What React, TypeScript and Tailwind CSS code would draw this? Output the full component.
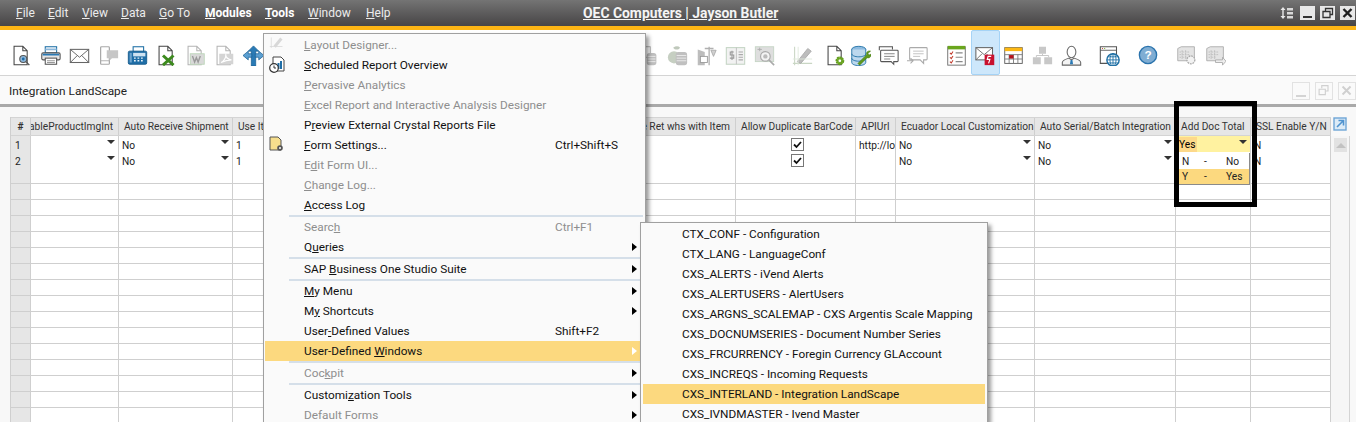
import React from "react";

const Mn = ({ t, className = "" }: { t: string; className?: string }) => {
  const i = t.indexOf("&");
  if (i < 0) return <span className={className}>{t}</span>;
  return (
    <span className={className}>
      {t.slice(0, i)}
      <u>{t[i + 1]}</u>
      {t.slice(i + 2)}
    </span>
  );
};

const G = "#a9a9a9";
const Page = ({ c = "#444" }: { c?: string }) => (
  <path d="M3.5 1.5h10l5 5v16h-15z M13.5 1.5v5h5" fill="#fff" stroke={c} strokeWidth="1.2" />
);
const icons: Record<string, React.ReactNode> = {
  docSearch: (
    <>
      <Page />
      <circle cx="14" cy="16" r="4" fill="#8db8dc" stroke="#555" strokeWidth="1.2" />
      <circle cx="14" cy="16" r="1.6" fill="#1f6ca8" />
      <path d="M17 19l4 4" stroke="#555" strokeWidth="1.6" />
    </>
  ),
  print: (
    <>
      <rect x="6" y="2" width="13" height="7" fill="#fff" stroke="#1c6ea4" strokeWidth="1.2" />
      <rect x="6" y="4" width="13" height="2" fill="#8db8dc" />
      <rect x="2" y="9" width="21" height="8" rx="1.5" fill="#e6e6e6" stroke="#555" strokeWidth="1.2" />
      <rect x="3" y="10" width="19" height="2" fill="#2a7ab5" />
      <rect x="6" y="15" width="13" height="7" fill="#fff" stroke="#555" strokeWidth="1.2" />
      <path d="M8 18h9M8 20h9" stroke="#888" />
    </>
  ),
  mail: (
    <>
      <rect x="1.5" y="5" width="21" height="15" fill="#fff" stroke="#666" strokeWidth="1.2" />
      <path d="M1.5 5l10.5 9 10.5-9M1.5 20l8-8M22.500 20l-8-8" fill="none" stroke="#666" strokeWidth="1.1" />
    </>
  ),
  mobile: (
    <>
      <rect x="3" y="2" width="10" height="20" rx="1" fill="#fff" stroke={G} strokeWidth="1.4" />
      <path d="M3 18h10" stroke={G} />
      <path d="M10 6h13v9h-7l-3 3v-3h-3z" fill="#c6c6c6" />
    </>
  ),
  fax: (
    <>
      <rect x="7" y="2" width="12" height="6" fill="#fff" stroke="#1c6ea4" strokeWidth="1.2" />
      <rect x="1.500" y="7" width="21" height="15" rx="1.500" fill="#1f6ea7" stroke="#155a8c" />
      <rect x="7" y="9" width="14" height="4" fill="#cfe3f2" />
      <path d="M8 15h2M12 15h2M16 15h2M8 18h2M12 18h2M16 18h2" stroke="#e9f3fa" strokeWidth="1.500" />
      <rect x="3" y="9" width="2.500" height="11" fill="#6ea5cf" />
    </>
  ),
  excel: (
    <>
      <Page />
      <path d="M8 12l12 11M20 12L8 23" stroke="#3d8a1e" strokeWidth="3.4" />
    </>
  ),
  word: (
    <>
      <Page c="#b4b4b4" />
      <rect x="6" y="10" width="16" height="12" fill="#d9d9d9" stroke="#bcd6b8" />
      <path d="M8.500 12.500l2.500 7 2-5 2 5 2.500-7" fill="none" stroke="#9a9a9a" strokeWidth="1.600" />
    </>
  ),
  pdf: (
    <>
      <Page c="#b4b4b4" />
      <rect x="6" y="10" width="16" height="12" fill="#d4d4d4" />
      <path d="M8 20c3-1 6-6 5.500-8.500C13 13 16 17 20 17c-4 0-8 1-12 3z" fill="none" stroke="#fff" strokeWidth="1.400" />
    </>
  ),
  arrows: (
    <>
      <path d="M12 1l6 6h-3.500v17h-5V7H6z" fill="#2a7ab5" stroke="#135a8f" strokeWidth=".8" />
      <path d="M0 12l6-5v3h4v4H6v3zM24 12l-6-5v3h-4v4h4v3z" fill="#5b9fd1" stroke="#135a8f" strokeWidth=".8" />
    </>
  ),
  coinsA: (
    <>
      <rect x="2" y="2" width="12" height="12" fill="#fff" stroke={G} />
      <rect x="10" y="9" width="11" height="14" rx="3" fill="#bfbfbf" />
      <path d="M11 13h9M11 16h9M11 19h9" stroke="#eee" />
    </>
  ),
  coinsB: (
    <>
      <circle cx="8" cy="14" r="7" fill="#c6cfc2" />
      <path d="M7 3c3-2 6-2 8 0-2 3-6 3-8 0z" fill="#bfc8bb" />
      <rect x="10" y="8" width="13" height="15" rx="3" fill="#c0c0c0" />
      <path d="M11 12h11M11 15h11M11 18h11" stroke="#eee" />
    </>
  ),
  scale: (
    <>
      <path d="M2 5l8 3v15H2z" fill="#bdbdbd" />
      <path d="M10 4h10M15 2v21" stroke="#b0b0b0" strokeWidth="1.500" />
      <rect x="5" y="13" width="8" height="7" fill="#fff" stroke="#999" />
      <path d="M17 6h6l-3 7z" fill="#d0d0d0" stroke="#aaa" />
    </>
  ),
  dollarDoc: (
    <>
      <rect x="1.500" y="3" width="21" height="19" fill="#f2f2f2" stroke="#c4d4c4" strokeWidth="1.200" />
      <path d="M13 3v19" stroke="#bbb" />
      <path d="M10 8H6v3.500h4V15H5.500M8 6.500V17" fill="none" stroke="#999" strokeWidth="1.200" />
      <path d="M15.500 8h5M15.500 11h5M15.500 14h5M15.500 17h5" stroke="#aaa" strokeWidth="1.400" />
    </>
  ),
  docFind: (
    <>
      <rect x="1.500" y="2" width="21" height="17" fill="#dedede" stroke="#c4d4c4" />
      <circle cx="13" cy="13" r="5.500" fill="#f4f4f4" stroke="#aaa" strokeWidth="1.300" />
      <circle cx="13" cy="13" r="2.500" fill="#bbb" />
      <path d="M17 17l6 6" stroke="#aaa" strokeWidth="1.800" />
      <path d="M4 5h5M6.500 3v4" stroke="#aaa" />
    </>
  ),
  pencilChart: (
    <>
      <path d="M3 2v21M1 21h22" stroke="#c9d6c4" strokeWidth="1.200" />
      <path d="M6 19L18 4l4 3-12 14z" fill="#bdbdbd" stroke="#aaa" />
      <path d="M1 16h22M7 2v21" stroke="#dfe8dc" />
    </>
  ),
  docGear: (
    <>
      <Page />
      <circle cx="17" cy="18" r="3.500" fill="none" stroke="#5f9a1d" strokeWidth="3" strokeDasharray="2 .6" />
      <circle cx="17" cy="18" r="4" fill="#6aa61d" fillOpacity=".85" />
      <circle cx="17" cy="18" r="1.500" fill="#fff" />
    </>
  ),
  dbWrench: (
    <>
      <ellipse cx="10" cy="5" rx="8" ry="3.500" fill="#8dbbe0" stroke="#1c6ea4" />
      <path d="M2 5v15c0 2 3.500 3.500 8 3.500s8-1.500 8-3.500V5" fill="#bcd8ee" stroke="#1c6ea4" />
      <path d="M2 10c0 2 3.500 3.500 8 3.500s8-1.500 8-3.500M2 15c0 2 3.500 3.500 8 3.500s8-1.500 8-3.500" fill="none" stroke="#1c6ea4" />
      <path d="M9 21l10-10c-1-3 2-5 4.500-4l-3 2.500 1 2 2.500-1c.5 3-2 5-4.500 4L11 23z" fill="#5f9a1d" stroke="#3f7510" strokeWidth=".6" />
    </>
  ),
  chat: (
    <>
      <path d="M1.500 6V2h15v3" fill="none" stroke="#555" strokeWidth="1.200" />
      <path d="M4 6h18a1 1 0 011 1v11a1 1 0 01-1 1h-4v3l-3-3H4a1 1 0 01-1-1V7a1 1 0 011-1z" fill="#fff" stroke="#555" strokeWidth="1.200" />
      <path d="M7 10h12M7 13h12M7 16h7" stroke="#777" />
    </>
  ),
  chat2: (
    <>
      <path d="M4 3h18a1 1 0 011 1v12a1 1 0 01-1 1h-3v4l-4-4H4a1 1 0 01-1-1V4a1 1 0 011-1z" fill="#fff" stroke="#aaa" strokeWidth="1.200" />
      <path d="M7 7h12M7 10h12M7 13h8" stroke="#bbb" />
      <path d="M0 18h7m-3-3l3 3-3 3" fill="none" stroke="#aaa" strokeWidth="1.200" />
    </>
  ),
  tasks: (
    <>
      <rect x="2" y="2" width="20" height="21" fill="#fff" stroke="#666" />
      <rect x="2" y="1" width="20" height="4" fill="#6aa61d" />
      <path d="M4.500 9l1.500 1.500 2-3M4.500 14l1.500 1.500 2-3M4.500 19l1.500 1.500 2-3" fill="none" stroke="#c0392b" strokeWidth="1.200" />
      <path d="M11 9h8M11 14h8M11 19h8" stroke="#888" strokeWidth="1.400" />
    </>
  ),
  mailS: (
    <>
      <rect x="1" y="3" width="19" height="14" fill="#fff" stroke="#666" strokeWidth="1.200" />
      <path d="M1 3l9.500 8L20 3M1 17l7-7M20 17l-7-7" fill="none" stroke="#666" />
      <rect x="11" y="11" width="11" height="12" fill="#c8102e" />
      <path d="M18.500 13h-3.500l-1 3.500h3l-1.500 4.500" fill="none" stroke="#fff" strokeWidth="1.300" />
    </>
  ),
  calendar: (
    <>
      <rect x="2" y="3" width="20" height="18" fill="#fff" stroke="#555" />
      <rect x="2" y="3" width="20" height="4" fill="#fdb813" />
      <path d="M2 11h20M2 16h20M7 11v10M12 11v10M17 11v10" stroke="#777" />
      <rect x="7" y="11.500" width="5" height="4" fill="#b5121b" />
    </>
  ),
  org: (
    <>
      <rect x="8" y="2" width="8" height="8" fill="#c8c8c8" />
      <rect x="1" y="14" width="9" height="8" fill="#c8c8c8" />
      <rect x="14" y="14" width="9" height="8" fill="#c8c8c8" />
      <path d="M12 10v2M5 14v-2h14v2" fill="none" stroke="#c0c0c0" />
    </>
  ),
  user: (
    <>
      <ellipse cx="12" cy="8" rx="5" ry="6.500" fill="#fff" stroke="#666" strokeWidth="1.200" />
      <path d="M1.500 23v-3c0-3 5-4 7.500-5l3 2 3-2c2.500 1 7.500 2 7.500 5v3z" fill="#f4f4f4" stroke="#666" strokeWidth="1.200" />
      <path d="M11 17h2l.8 5h-3.600z" fill="#2a7ab5" />
    </>
  ),
  web: (
    <>
      <path d="M20 13V2H1.500v19H10" fill="#fff" stroke="#555" strokeWidth="1.200" />
      <path d="M1.500 6H20" stroke="#555" />
      <circle cx="4" cy="4" r=".7" fill="#c0392b" />
      <circle cx="6.500" cy="4" r=".7" fill="#6aa61d" />
      <circle cx="16" cy="17" r="7" fill="#fff" stroke="#1c6ea4" strokeWidth="1.600" />
      <path d="M9 17h14M16 10v14M10.500 13.500h11M10.500 20.500h11" stroke="#1c6ea4" />
      <ellipse cx="16" cy="17" rx="3.500" ry="7" fill="none" stroke="#1c6ea4" />
    </>
  ),
  gridGear: (
    <>
      <path d="M2 4l4-2h15v16H2z" fill="#e4e4e4" stroke="#aaa" />
      <path d="M4 8h12M4 11h12M4 14h8M7 6v10M11 6v10" stroke="#bbb" strokeDasharray="2 1" />
      <circle cx="17" cy="17" r="4.500" fill="#f2f2f2" stroke="#aaa" strokeWidth="1.500" strokeDasharray="2 1" />
    </>
  ),
  gridArrow: (
    <>
      <path d="M2 4l4-2h15v16H2z" fill="#e4e4e4" stroke="#aaa" />
      <path d="M4 8h12M4 11h12M4 14h8M7 6v10M11 6v10" stroke="#bbb" strokeDasharray="2 1" />
      <path d="M12 17h8v-3l4 4.500-4 4.500v-3h-8z" fill="#eee" stroke="#aaa" />
    </>
  ),
  layoutSmall: (
    <>
      <path d="M3 2v14M1 14h17" stroke="#d6d6d6" />
      <path d="M6 13L15 2l3 2.500-9 11z" fill="#d8d8d8" />
    </>
  ),
};

const Ico = ({ n, size = 21, className = "" }: { n: string; size?: number; className?: string }) => (
  <svg width={size} height={size} viewBox="0 0 24 24" className={`shrink-0 ${className}`}>
    {icons[n]}
  </svg>
);

const toolbar: [string, string][] = [
  ["docSearch", "ml-[11px]"],
  ["print", "ml-[8px]"],
  ["mail", "ml-[8px]"],
  ["mobile", "ml-[8px]"],
  ["fax", "ml-[8px]"],
  ["excel", "ml-[8px]"],
  ["word", "ml-[8px]"],
  ["pdf", "ml-[8px]"],
  ["arrows", "ml-[8px]"],
  ["coinsA", "ml-[374px]"],
  ["coinsB", "ml-[8px]"],
  ["scale", "ml-[8px]"],
  ["dollarDoc", "ml-[8px]"],
  ["docFind", "ml-[8px]"],
  ["pencilChart", "ml-[17px]"],
  ["docGear", "ml-[12px]"],
  ["dbWrench", "ml-[4px]"],
  ["chat", "ml-[7px]"],
  ["chat2", "ml-[8px]"],
  ["tasks", "ml-[18px]"],
];

const ws = "[font-family:Roboto,sans-serif]";

const TopMenu = () => (
  <div className={`relative flex h-[26px] items-center bg-gradient-to-b from-[#747474] to-[#474546] pl-[16px] text-[12px] text-[#ececec] ${ws}`}>
    <Mn t="&File" className="w-[32px]" />
    <Mn t="&Edit" className="w-[34px]" />
    <Mn t="&View" className="w-[39px]" />
    <Mn t="&Data" className="w-[38px]" />
    <Mn t="&Go To" className="w-[46px]" />
    <Mn t="&Modules" className="w-[60px] font-bold text-white" />
    <Mn t="&Tools" className="w-[43px] font-bold text-white" />
    <Mn t="&Window" className="w-[58px]" />
    <Mn t="&Help" className="w-[40px]" />
    <span className="absolute left-[583px] top-[4px] text-[13.900px] font-bold leading-[18px] text-[#f4f4f4] underline">
      OEC Computers | Jayson Butler
    </span>
    <div className="ml-auto mr-[1px] flex items-center">
      <svg width="14" height="14" viewBox="0 0 14 14" className="mr-[6px]">
        <path d="M3 1l2.500 3h-5zM3 13l2.500-3h-5zM2.300 4h1.400v6H2.300z" fill="#e8e8e8" />
        <path d="M7 2h6v2.500H7zM7 6h6v2.500H7zM7 10h6v2.500H7z" fill="#d8d8d8" />
      </svg>
      <span className="flex h-[14px] w-[15px] items-end justify-center bg-[#e8e8e8] pb-[2px]">
        <span className="h-[2px] w-[9px] bg-[#333]" />
      </span>
      <svg width="15" height="14" viewBox="0 0 15 14" className="ml-[5px] bg-[#e8e8e8]">
        <path d="M5.500 5V2.500h7v6H10M3 5.500h7v6H3z" fill="none" stroke="#333" strokeWidth="1.300" />
      </svg>
      <svg width="15" height="14" viewBox="0 0 15 14" className="ml-[5px] bg-[#e8e8e8]">
        <path d="M3.500 3l8 8M11.500 3l-8 8" stroke="#222" strokeWidth="2.400" />
      </svg>
    </div>
  </div>
);

const Toolbar = () => (
  <div className="flex h-[46px] items-center border-b border-[#d4d4d4] bg-white pt-[5px]">
    {toolbar.map(([n, c]) => (
      <Ico key={n} n={n} className={c} />
    ))}
    <span className="-mt-[5px] ml-[4px] flex h-[45px] w-[29px] shrink-0 items-center justify-center self-start rounded-[2px] border border-[#a5d3f6] bg-[#cde7fb] pt-[5px]">
      <Ico n="mailS" />
    </span>
    <Ico n="calendar" className="ml-[3px]" />
    <Ico n="org" className="ml-[8px]" />
    <Ico n="user" className="ml-[8px]" />
    <Ico n="web" className="ml-[17px]" />
    <svg width="20" height="20" viewBox="0 0 22 22" className="ml-[18px] shrink-0">
      <circle cx="11" cy="11" r="9.500" fill="#7fadd3" stroke="#2a73ad" strokeWidth="1.500" />
      <text x="11" y="15.500" textAnchor="middle" fontSize="13" fontWeight="700" fill="#fff" fontFamily="Liberation Sans, sans-serif">?</text>
    </svg>
    <Ico n="gridGear" className="ml-[18px]" />
    <Ico n="gridArrow" className="ml-[8px]" />
  </div>
);

const FormBar = () => (
  <div className={`flex h-[31px] items-center justify-between border-b-[3px] border-[#a9a9a9] bg-[#fafafa] pl-[9px] pt-[1px] text-[11.800px] text-[#222] ${ws}`}>
    <span className="mt-[3px]">Integration LandScape</span>
    <div className="flex items-center gap-[5px]">
      <span className="flex h-[18px] w-[18px] items-end justify-center border border-[#e2e2e2] pb-[2px]">
        <span className="h-[2px] w-[10px] bg-[#d4d4d4]" />
      </span>
      <svg width="18" height="18" viewBox="0 0 18 18" className="border border-[#e2e2e2]">
        <path d="M6.500 6V3h7v6H11M3.500 7h7v6h-7z" fill="none" stroke="#d0d0d0" strokeWidth="1.300" />
      </svg>
      <svg width="18" height="18" viewBox="0 0 18 18" className="border border-[#e2e2e2]">
        <path d="M4 4l9 9M13 4l-9 9" stroke="#d0d0d0" strokeWidth="2.200" />
      </svg>
    </div>
  </div>
);

const cols = "grid w-[1320px] grid-cols-[20px_88px_114px_167px_336px_120px_40px_139px_141px_75px_80px]";
const gridFont = "[font-family:Roboto,sans-serif] text-[10.200px]";

const Head = ({ t, end = false }: { t: string; end?: boolean }) => (
  <div className={`flex items-center overflow-hidden whitespace-nowrap border-r border-[#cfcfcf] ${end ? "justify-end pr-[5px]" : "pl-[5px]"}`}>
    <span className="shrink-0">{t}</span>
  </div>
);

const Cell = ({ t = "", combo = false, check = false, className = "" }: { t?: string; combo?: boolean; check?: boolean; className?: string }) => (
  <div className={`relative flex items-center overflow-hidden whitespace-nowrap border-b border-r border-[#cfcfcf] bg-white pl-[3px] ${check ? "justify-center" : ""} ${className}`}>
    {t && <span className="mt-[2px] text-[#1a1a1a]">{t}</span>}
    {combo && <span className="absolute right-[3px] top-[4px] h-0 w-0 border-x-[4px] border-t-[4px] border-x-transparent border-t-[#333]" />}
    {check && (
      <svg width="13" height="13" viewBox="0 0 13 13">
        <rect x=".5" y=".5" width="12" height="12" fill="#fff" stroke="#777" />
        <path d="M3 6.500l2.500 2.500L10 4" fill="none" stroke="#111" strokeWidth="1.800" />
      </svg>
    )}
  </div>
);

const NumCell = ({ t = "" }: { t?: string }) => (
  <div className="flex items-center border-b border-r border-[#cfcfcf] bg-[#e6e6e6] pl-[4px] pt-[2px] text-[#222]">{t}</div>
);

const Grid = () => (
  <div className={`flex bg-[#f8f8f8] pl-[11px] pt-[10px] ${gridFont}`}>
    <div className="shrink-0 border-l border-[#cfcfcf] -ml-px">
      <div className={`${cols} h-[19px] border-y border-[#d4d4d4] bg-[#e6e6e6] text-[#333]`}>
        <div className="flex items-center justify-center border-r border-[#cfcfcf] font-bold">#</div>
        <Head t="EnableProductImgInt" end />
        <Head t="Auto Receive Shipment" />
        <Head t="Use Item Price" />
        <Head t="Use Ret whs with Item" end />
        <Head t="Allow Duplicate BarCode" />
        <Head t="APIUrl" />
        <Head t="Ecuador Local Customization" />
        <Head t="Auto Serial/Batch Integration" />
        <Head t="Add Doc Total" />
        <Head t="SSL Enable Y/N" />
      </div>
      <div className={`${cols} h-4`}>
        <NumCell t="1" />
        <Cell combo />
        <Cell t="No" combo />
        <Cell t="1" />
        <Cell />
        <Cell check />
        <Cell t="http://localhost" />
        <Cell t="No" combo />
        <Cell t="No" combo />
        <div className="relative flex items-center border-b border-r border-[#cfcfcf] bg-[#fff2a0] pl-[3px]">
          <span className="-ml-[3px] bg-[#fdd98a] pl-[3px] pr-[2px] leading-[15px]">Yes</span>
          <span className="absolute right-[3px] top-[4px] h-0 w-0 border-x-[4px] border-t-[4px] border-x-transparent border-t-[#333]" />
        </div>
        <Cell t="N" />
      </div>
      <div className={`${cols} h-4`}>
        <NumCell t="2" />
        <Cell combo />
        <Cell t="No" combo />
        <Cell t="1" />
        <Cell />
        <Cell check />
        <Cell />
        <Cell t="No" combo />
        <Cell t="No" combo />
        <Cell />
        <Cell t="N" />
      </div>
      {Array.from({ length: 16 }).map((_, r) => (
        <div key={r} className={`${cols} h-4`}>
          <NumCell />
          {Array.from({ length: 10 }).map((_, c) => (
            <Cell key={c} />
          ))}
        </div>
      ))}
    </div>
    <div className="w-[19px] shrink-0">
      <svg width="14" height="14" viewBox="0 0 14 14" className="ml-[2px]">
        <rect x="1" y="1" width="12" height="12" fill="#dcebf7" stroke="#6ea5d6" strokeWidth="1.400" />
        <path d="M4 10l6-6M5.500 3.500h5v5" fill="none" stroke="#4f93cf" strokeWidth="1.600" />
      </svg>
      <div className="mt-[5px] h-[300px] border-r border-[#d4d4d4] bg-[#f6f6f6] pl-[3px] pt-[2px]">
        <div className="flex h-[14px] w-[13px] items-center justify-center bg-[#e2e2e2]">
          <span className="h-0 w-0 border-x-[5px] border-b-[5px] border-x-transparent border-b-[#c2c2c2]" />
        </div>
      </div>
    </div>
  </div>
);

type Item = { t?: string; d?: boolean; k?: string; a?: boolean; hi?: boolean; ic?: React.ReactNode; sep?: boolean };

const Arrow = ({ white = false }: { white?: boolean }) => (
  <span className={`absolute right-[3px] top-[6px] h-0 w-0 border-y-[4px] border-l-[5px] border-y-transparent ${white ? "border-l-white" : "border-l-black"}`} />
);

const menuItems: Item[] = [
  { t: "&Layout Designer...", d: true, ic: <Ico n="layoutSmall" size={18} /> },
  {
    t: "&Scheduled Report Overview",
    ic: (
      <svg width="16" height="17" viewBox="0 0 16 17">
        <path d="M4 1h8l3 3v11H4z" fill="#fff" stroke="#444" />
        <path d="M9.500 7v6M12 5v8" stroke="#1f6ea7" strokeWidth="2" />
        <circle cx="5" cy="12" r="4.300" fill="#fff" stroke="#333" strokeWidth="1.200" />
        <path d="M5 9.500V12h2" fill="none" stroke="#333" />
      </svg>
    ),
  },
  { t: "&Pervasive Analytics", d: true },
  { t: "&Excel Report and Interactive Analysis Designer", d: true },
  { t: "P&review External Crystal Reports File" },
  {
    t: "&Form Settings...",
    k: "Ctrl+Shift+S",
    ic: (
      <svg width="15" height="16" viewBox="0 0 15 16">
        <path d="M1 1h8l3 3v10H1z" fill="#f6de8d" stroke="#555" />
        <circle cx="11" cy="12" r="2.800" fill="#555" />
        <circle cx="11" cy="12" r="1" fill="#fff" />
      </svg>
    ),
  },
  { t: "E&dit Form UI...", d: true },
  { t: "&Change Log...", d: true },
  { t: "&Access Log" },
  { sep: true },
  { t: "Searc&h", d: true, k: "Ctrl+F1" },
  { t: "Q&ueries", a: true },
  { sep: true },
  { t: "SAP &Business One Studio Suite", a: true },
  { sep: true },
  { t: "&My Menu", a: true },
  { t: "M&y Shortcuts", a: true },
  { t: "User&-Defined Values", k: "Shift+F2" },
  { t: "User-Defined &Windows", a: true, hi: true },
  { sep: true },
  { t: "Coc&kpit", d: true, a: true },
  { sep: true },
  { t: "Customi&zation Tools", a: true },
  { t: "Default Forms", d: true, a: true },
];

const subItems = [
  "CTX_CONF - Configuration",
  "CTX_LANG - LanguageConf",
  "CXS_ALERTS - iVend Alerts",
  "CXS_ALERTUSERS - AlertUsers",
  "CXS_ARGNS_SCALEMAP - CXS Argentis Scale Mapping",
  "CXS_DOCNUMSERIES - Document Number Series",
  "CXS_FRCURRENCY - Foregin Currency GLAccount",
  "CXS_INCREQS - Incoming Requests",
  "CXS_INTERLAND - Integration LandScape",
  "CXS_IVNDMASTER - Ivend Master",
];

const Menu = () => (
  <div className={`absolute left-[263px] top-[33px] w-[383px] border border-[#a0a0a0] bg-[#fafafa] pt-[1px] text-[11.800px] shadow-[3px_3px_4px_rgba(0,0,0,0.4)] ${ws}`}>
    {menuItems.map((m, i) =>
      m.sep ? (
        <div key={i} className="ml-[25px] mr-[2px] h-[2px] bg-[#d5dfe9]" />
      ) : (
        <div
          key={i}
          className={`relative ml-[1px] mr-[5px] flex h-[20px] items-center pt-[1px] leading-none ${m.hi ? "bg-[#fcd97f]" : ""} ${m.d ? "text-[#8e8e8e]" : "text-[#111]"}`}
        >
          <span className="absolute left-[4px] top-[1px]">{m.ic}</span>
          <Mn t={m.t as string} className="ml-[39px]" />
          {m.k && <span className="absolute left-[290px]">{m.k}</span>}
          {m.a && <Arrow white={m.hi} />}
        </div>
      ),
    )}
  </div>
);

const SubMenu = () => (
  <div className={`absolute left-[640px] top-[222px] w-[348px] border border-[#a0a0a0] bg-[#fafafa] pb-[10px] pt-[1px] text-[11.800px] text-[#111] shadow-[3px_3px_4px_rgba(0,0,0,0.4)] ${ws}`}>
    {subItems.map((s, i) => (
      <div key={s} className={`ml-[2px] mr-[2px] flex h-[20px] items-center pl-[39px] pt-[1px] ${i === 8 ? "bg-[#fcd97f]" : ""}`}>
        {s}
      </div>
    ))}
  </div>
);

const Dropdown = () => (
  <div className={`absolute left-[1179px] top-[153px] w-[71px] border-b border-r border-[#8a8a8a] bg-white ${gridFont} text-[#222]`}>
    <div className="flex h-[16px] items-center pt-[2px]">
      <span className="ml-[3px] w-[22px]">N</span>
      <span className="w-[22px]">-</span>
      <span>No</span>
    </div>
    <div className="flex h-[15px] items-center bg-[#fcd97f] pt-[1px]">
      <span className="ml-[3px] w-[22px]">Y</span>
      <span className="w-[22px]">-</span>
      <span>Yes</span>
    </div>
  </div>
);

export default function App() {
  return (
    <div className="relative h-[441px] w-[1356px] overflow-hidden bg-white">
      <div className="relative h-[422px] overflow-hidden">
        <TopMenu />
        <div className="h-[4px] bg-[#fdb515]" />
        <Toolbar />
        <FormBar />
        <Grid />
        <Dropdown />
        <div className="absolute left-[1174px] top-[101px] h-[106px] w-[83px] border-[5px] border-black" />
        <Menu />
        <SubMenu />
      </div>
    </div>
  );
}
